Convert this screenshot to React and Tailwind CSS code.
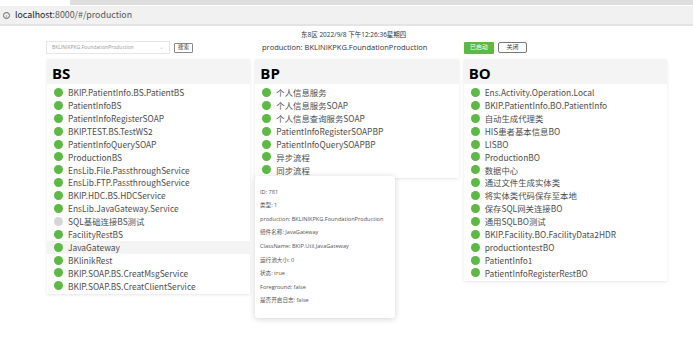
import React from 'react';

const bsItems = [
  ['BKIP.PatientInfo.BS.PatientBS', true],
  ['PatientInfoBS', true],
  ['PatientInfoRegisterSOAP', true],
  ['BKIP.TEST.BS.TestWS2', true],
  ['PatientInfoQuerySOAP', true],
  ['ProductionBS', true],
  ['EnsLib.File.PassthroughService', true],
  ['EnsLib.FTP.PassthroughService', true],
  ['BKIP.HDC.BS.HDCService', true],
  ['EnsLib.JavaGateway.Service', true],
  ['SQL基础连接BS测试', false],
  ['FacilityRestBS', true],
  ['JavaGateway', true, true],
  ['BKlinikRest', true],
  ['BKIP.SOAP.BS.CreatMsgService', true],
  ['BKIP.SOAP.BS.CreatClientService', true]
];

const bpItems = [
  ['个人信息服务', true],
  ['个人信息服务SOAP', true],
  ['个人信息查询服务SOAP', true],
  ['PatientInfoRegisterSOAPBP', true],
  ['PatientInfoQuerySOAPBP', true],
  ['异步流程', true],
  ['同步流程', true]
];

const boItems = [
  ['Ens.Activity.Operation.Local', true],
  ['BKIP.PatientInfo.BO.PatientInfo', true],
  ['自动生成代理类', true],
  ['HIS患者基本信息BO', true],
  ['LISBO', true],
  ['ProductionBO', true],
  ['数据中心', true],
  ['通过文件生成实体类', true],
  ['将实体类代码保存至本地', true],
  ['保存SQL网关连接BO', true],
  ['通用SQLBO测试', true],
  ['BKIP.Facility.BO.FacilityData2HDR', true],
  ['productiontestBO', true],
  ['PatientInfo1', true],
  ['PatientInfoRegisterRestBO', true]
];

const tipLines = [
  'ID: 781',
  '类型: 1',
  'production: BKLINIKPKG.FoundationProduction',
  '组件名称: JavaGateway',
  'ClassName: BKIP.Util.JavaGateway',
  '运行池大小: 0',
  '状态: true',
  'Foreground: false',
  '是否开启日志: false'
];

const Panel = ({ title, items }) => (
  <div className="bg-white shadow-[0_1px_3px_rgba(0,0,0,0.10)] pb-[2px]">
    <div className="h-[25px] bg-[#f4f4f4] px-[5px] flex items-end pb-[3px] text-[15px] font-bold text-black leading-none font-['Open_Sans',sans-serif]">
      {title}
    </div>
    <div className="pt-[2px] font-['Noto_Sans_CJK_SC',sans-serif]">
      {items.map(([name, on, hover]) => (
        <div key={name} className={`h-[12.9px] flex items-center ${hover ? 'bg-[#f4f4f4]' : ''}`}>
          <span className={`ml-[7px] w-[9px] h-[9px] rounded-full shrink-0 ${on ? 'bg-[#5cb944]' : 'bg-[#d6d6d6]'}`} />
          <span className="ml-[5px] text-[8.4px] leading-none text-[#4d4d4d] whitespace-nowrap">{name}</span>
        </div>
      ))}
    </div>
  </div>
);

export default function App() {
  return (
    <div className="relative w-[693px] h-[358px] bg-white overflow-hidden font-['Open_Sans','Noto_Sans_CJK_SC',sans-serif]">
      {/* browser chrome */}
      <div className="flex h-[5px]">
        <div className="w-[70px] bg-white" />
        <div className="flex-1 bg-[#dedede]" />
      </div>
      <div className="h-[20px] mt-[1px] bg-[#f1f1f1] flex items-center px-[3px] text-[8.8px] text-[#555] border-b-2 border-[#e4e4e4] font-['Noto_Sans_CJK_SC',sans-serif]">
        <span className="w-[7px] h-[7px] rounded-full border border-[#666] text-[5px] leading-none flex items-center justify-center mr-[5px]">i</span>
        <span className="text-[#222]">localhost</span>
        <span>:8000/#/production</span>
      </div>

      <div className="pt-[4px] h-[13px] text-[6.5px] leading-[10px] text-[#333] pl-[301px]">
        东8区 2022/9/8 下午12:26:36星期四
      </div>

      {/* toolbar */}
      <div className="mt-[2px] flex items-center h-[13px]">
        <div className="ml-[46px] w-[124px] h-[13px] border border-[#e6e6e6] flex items-center justify-between px-[5px] text-[5px] text-[#999]">
          <span>BKLINIKPKG.FoundationProduction</span>
          <span className="text-[#ccc] text-[6px]">⌄</span>
        </div>
        <div className="ml-[4px] w-[19px] h-[10px] border border-[#888] rounded-[1px] text-[5.5px] text-[#333] flex items-center justify-center">搜索</div>
        <div className="ml-[69px] w-[202px] text-[7.5px] text-[#333] whitespace-nowrap">production: BKLINIKPKG.FoundationProduction</div>
        <div className="w-[30px] h-[12px] bg-[#5cb944] rounded-[1px] text-white text-[6px] flex items-center justify-center">已启动</div>
        <div className="ml-[4px] w-[29px] h-[11px] border border-[#777] rounded-[2px] text-[6px] text-[#333] flex items-center justify-center">关闭</div>
      </div>

      {/* panels */}
      <div className="mt-[5px] ml-[47px] w-[620px] grid grid-cols-3 gap-[5px] items-start">
        <Panel title="BS" items={bsItems} />
        <Panel title="BP" items={bpItems} />
        <Panel title="BO" items={boItems} />
      </div>

      {/* tooltip */}
      <div className="absolute left-[255px] top-[176px] w-[140px] h-[142px] bg-white rounded-[3px] shadow-[0_1px_6px_rgba(0,0,0,0.18)] pt-[9px] px-[5px]">
        {tipLines.map((t) => (
          <div key={t} className="h-[13.6px] flex items-center text-[5.6px] text-[#555] whitespace-nowrap">{t}</div>
        ))}
      </div>
    </div>
  );
}
